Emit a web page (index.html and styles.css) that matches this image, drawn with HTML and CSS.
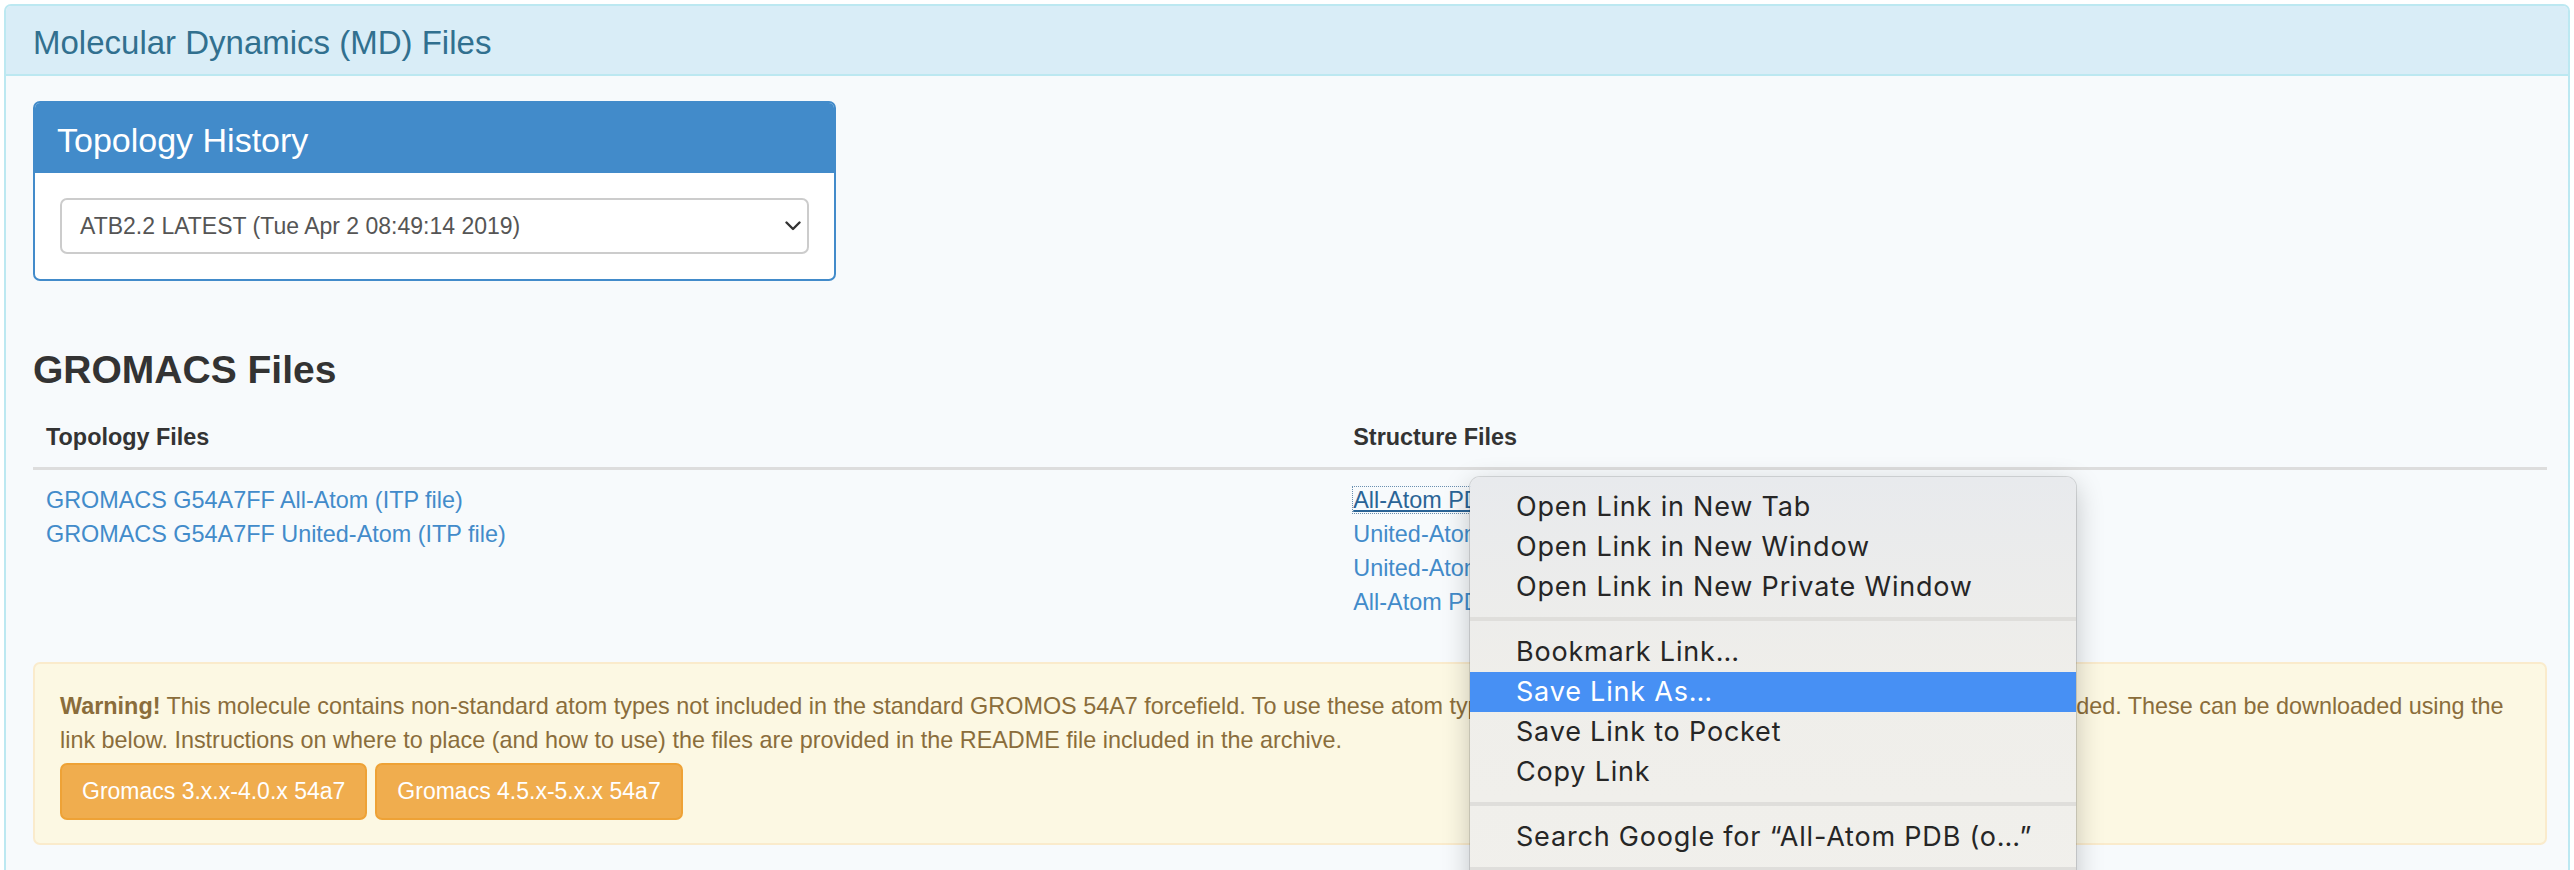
FILE: index.html
```html
<!DOCTYPE html>
<html lang="en">
<head>
<meta charset="utf-8">
<title>Molecular Dynamics (MD) Files</title>
<link rel="stylesheet" href="styles.css">
</head>
<body>
<div class="panel panel-info">
  <div class="panel-heading">
    <h3 class="panel-title">Molecular Dynamics (MD) Files</h3>
  </div>
  <div class="panel-body">
    <div class="panel panel-primary topo">
      <div class="panel-heading topo-heading">
        <h3 class="panel-title">Topology History</h3>
      </div>
      <div class="topo-body">
        <div class="select-box">
          <span class="select-text">ATB2.2 LATEST (Tue Apr 2 08:49:14 2019)</span>
          <svg class="chevron" width="16" height="10" viewBox="0 0 16 10"><path d="M1.5 1.5 L8 8 L14.5 1.5" fill="none" stroke="#333" stroke-width="2.4" stroke-linecap="round" stroke-linejoin="round"/></svg>
        </div>
      </div>
    </div>

    <h3 class="section-title">GROMACS Files</h3>
    <table class="files">
      <thead>
        <tr><th class="col-topo">Topology Files</th><th>Structure Files</th></tr>
      </thead>
      <tbody>
        <tr>
          <td>
            <a href="#">GROMACS G54A7FF All-Atom (ITP file)</a><br>
            <a href="#">GROMACS G54A7FF United-Atom (ITP file)</a>
          </td>
          <td>
            <a href="#" class="focused">All-Atom PDB (optimised geometry)</a><br>
            <a href="#">United-Atom PDB (optimised geometry)</a><br>
            <a href="#">United-Atom PDB (MD final coordinates)</a><br>
            <a href="#">All-Atom PDB (MD final coordinates)</a>
          </td>
        </tr>
      </tbody>
    </table>

    <div class="alert">
      <p class="alert-text"><strong>Warning!</strong> This molecule contains non-standard atom types not included in the standard GROMOS 54A7 forcefield. To use these atom types, the following additional forcefield files need to be included. These can be downloaded using the<br>link below. Instructions on where to place (and how to use) the files are provided in the README file included in the archive.</p>
      <div class="btns">
        <a href="#" class="btn">Gromacs 3.x.x-4.0.x 54a7</a>
        <a href="#" class="btn">Gromacs 4.5.x-5.x.x 54a7</a>
      </div>
    </div>
  </div>
</div>

<div class="ctx-menu">
  <div class="ctx-item">Open Link in New Tab</div>
  <div class="ctx-item">Open Link in New Window</div>
  <div class="ctx-item">Open Link in New Private Window</div>
  <div class="ctx-sep"></div>
  <div class="ctx-item">Bookmark Link…</div>
  <div class="ctx-item active">Save Link As…</div>
  <div class="ctx-item">Save Link to Pocket</div>
  <div class="ctx-item">Copy Link</div>
  <div class="ctx-sep"></div>
  <div class="ctx-item">Search Google for “All-Atom PDB (o…”</div>
  <div class="ctx-sep"></div>
  <div class="ctx-item">Inspect Element (Q)</div>
</div>
</body>
</html>
```

FILE: styles.css
```css
html, body {
  margin: 0;
  height: 870px;
  overflow: hidden;
}
body {
  padding: 4px 4px 0 4px;
  box-sizing: border-box;
  background: #ffffff;
  font-family: "Liberation Sans", Arial, sans-serif;
  font-size: 23.4px;
  line-height: 34px;
  color: #333333;
}
a {
  color: #428bca;
  text-decoration: none;
}
.panel {
  border: 2px solid #bce8f1;
  border-radius: 7px;
  background: #f7fafc;
}
.panel-heading {
  background: #d9edf7;
  border-bottom: 2px solid #bce8f1;
  border-radius: 5px 5px 0 0;
  padding: 20px 27px 14px;
}
.panel-title {
  margin: 0;
  font-size: 33px;
  line-height: 34px;
  font-weight: normal;
  color: #31708f;
}
.panel-body {
  padding: 25px 21px 40px 27px;
}
.panel-primary.topo {
  width: 799px;
  border-color: #428bca;
  background: #ffffff;
}
.topo-heading {
  background: #428bca;
  border-bottom-color: #428bca;
  padding-left: 22px;
}
.topo-heading .panel-title {
  font-size: 34px;
  color: #ffffff;
}
.topo-body {
  padding: 25px;
}
.select-box {
  display: flex;
  align-items: center;
  justify-content: space-between;
  height: 56px;
  box-sizing: border-box;
  padding: 0 6px 0 18px;
  border: 2px solid #cccccc;
  border-radius: 7px;
  background: #ffffff;
  color: #555555;
  font-size: 23px;
}
.chevron {
  display: block;
}
.section-title {
  margin: 67px 0 15px;
  font-size: 39px;
  line-height: 44px;
  font-weight: bold;
  color: #333333;
}
.files {
  width: 100%;
  border-collapse: collapse;
  margin-bottom: 30px;
}
.files th {
  text-align: left;
  padding: 13px;
  border-bottom: 3px solid #dddddd;
  font-weight: bold;
}
.files th.col-topo {
  width: 52%;
}
.files td {
  padding: 13px;
  vertical-align: top;
}
.files a.focused {
  color: #2a6496;
  text-decoration: underline;
  outline: 1px dotted #6a8fb0;
}
.alert {
  background: #fcf8e3;
  border: 2px solid #faebcc;
  border-radius: 7px;
  padding: 25px 25px 23px;
  color: #8a6d3b;
}
.alert-text {
  margin: 0;
}
.btns {
  display: flex;
  gap: 8px;
  margin-top: 6px;
}
.btn {
  display: inline-block;
  padding: 10px 20px;
  line-height: 33px;
  font-size: 23px;
  color: #ffffff;
  background: #f0ad4e;
  border: 2px solid #eea236;
  border-radius: 7px;
}

.ctx-menu {
  position: absolute;
  left: 1470px;
  top: 477px;
  width: 606px;
  padding-top: 10px;
  border-radius: 10px;
  background: linear-gradient(#e8eaed, #efeeea 45%, #f1f0ec);
  box-shadow: 0 0 0 1px rgba(0, 0, 0, 0.12), 0 8px 28px rgba(0, 0, 0, 0.22);
  font-family: Inter, "Liberation Sans", sans-serif;
  font-size: 27px;
  letter-spacing: 0.8px;
  color: #262626;
}
.ctx-item {
  height: 40px;
  line-height: 40px;
  padding-left: 46px;
  white-space: nowrap;
}
.ctx-item.active {
  background: #4790f4;
  color: #ffffff;
}
.ctx-sep {
  height: 4px;
  margin: 10px 0 11px;
  background: #dfdedb;
}
```
